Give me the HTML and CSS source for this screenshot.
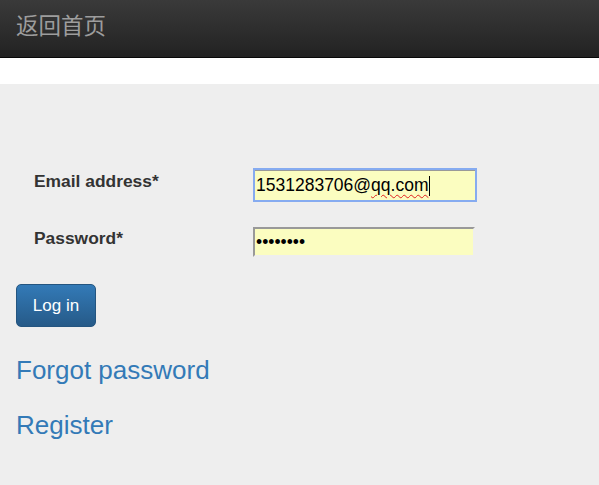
FILE: index.html
```html
<!DOCTYPE html>
<html lang="en">
<head>
    <meta charset="UTF-8">
    <meta name="viewport" content="width=device-width, initial-scale=1.0">
    <title>Log in</title>
    <link rel="stylesheet" href="styles.css">
</head>
<body>
    <!-- Top bar -->
    <div class="navbar">
        <a class="brand" href="#">返回首页</a>
    </div>

    <!-- Login form -->
    <div class="main">
        <form class="login-form">
            <div class="form-row">
                <label for="email">Email address*</label>
                <div class="field-wrap">
                    <input type="text" id="email" class="field field-focus" value="1531283706@qq.com" spellcheck="false">
                    <!-- spellcheck mark + caret drawn over the input -->
                    <span class="spell-mark">qq.com</span>
                </div>
            </div>
            <div class="form-row">
                <label for="password">Password*</label>
                <div class="field-wrap">
                    <input type="password" id="password" class="field" value="12345678">
                </div>
            </div>
            <button type="submit" class="btn-login">Log in</button>
        </form>

        <a class="big-link" href="#">Forgot password</a>
        <a class="big-link" href="#">Register</a>
    </div>
</body>
</html>
```

FILE: styles.css
```css
body {
    margin: 0;
    padding: 0;
    background-color: #fff;
    font-family: "Liberation Sans", Arial, sans-serif;
    color: #333;
}

/* Top bar */
.navbar {
    height: 57px;
    border-bottom: 1px solid #080808;
    background: linear-gradient(to bottom, #3a3a3a 0, #222 100%);
    margin-bottom: 26px;
    padding: 0 16px;
}

.brand {
    display: inline-block;
    margin-top: 13px;
    font-family: "Noto Sans CJK SC", sans-serif;
    font-size: 22.5px;
    line-height: 22px;
    color: #9d9d9d;
    text-decoration: none;
}

/* Main area */
.main {
    background-color: #eee;
    min-height: calc(100vh - 84px);
    padding: 86px 16px 1px;
    box-sizing: border-box;
}

.form-row {
    display: grid;
    grid-template-columns: 219px 224px;
    align-items: start;
    padding-left: 18px;
    margin-bottom: 27px;
}

.form-row label {
    font-weight: bold;
    font-size: 17.4px;
    line-height: 20px;
    padding-top: 1px;
}

.field-wrap {
    position: relative;
    height: 30px;
}

.field {
    box-sizing: border-box;
    width: 222px;
    height: 30px;
    margin: 0;
    padding: 0 1px;
    font-family: "Liberation Sans", Arial, sans-serif;
    font-size: 17.5px;
    color: #000;
    background-color: #fbfdc0;
    border: 2px solid #eee;
    border-top-color: #999;
    border-left-color: #999;
    outline: none;
}

.field-focus {
    width: 220px;
    margin-left: 2px;
    border: 0;
    box-shadow: inset 0 1px 0 #999;
    outline: 2px solid #86abf0;
}

.spell-mark {
    position: absolute;
    left: 118px;
    top: 6px;
    font-size: 17.5px;
    line-height: 20px;
    color: transparent;
    text-decoration: underline wavy #e02020;
    text-decoration-thickness: 1px;
    text-underline-offset: 2px;
    border-right: 1px solid #000;
    padding-right: 1px;
    pointer-events: none;
}

.btn-login {
    display: block;
    width: 80px;
    height: 43px;
    padding: 0;
    font-family: "Liberation Sans", Arial, sans-serif;
    font-size: 17px;
    color: #fff;
    background: linear-gradient(to bottom, #337ab7 0, #265a88 100%);
    border: 1px solid #245580;
    border-radius: 5px;
    cursor: pointer;
}

.big-link {
    display: block;
    width: max-content;
    font-size: 26px;
    line-height: 30px;
    color: #337ab7;
    text-decoration: none;
}

.big-link:first-of-type {
    margin-top: 28px;
}

.big-link + .big-link {
    margin-top: 25px;
}
```
